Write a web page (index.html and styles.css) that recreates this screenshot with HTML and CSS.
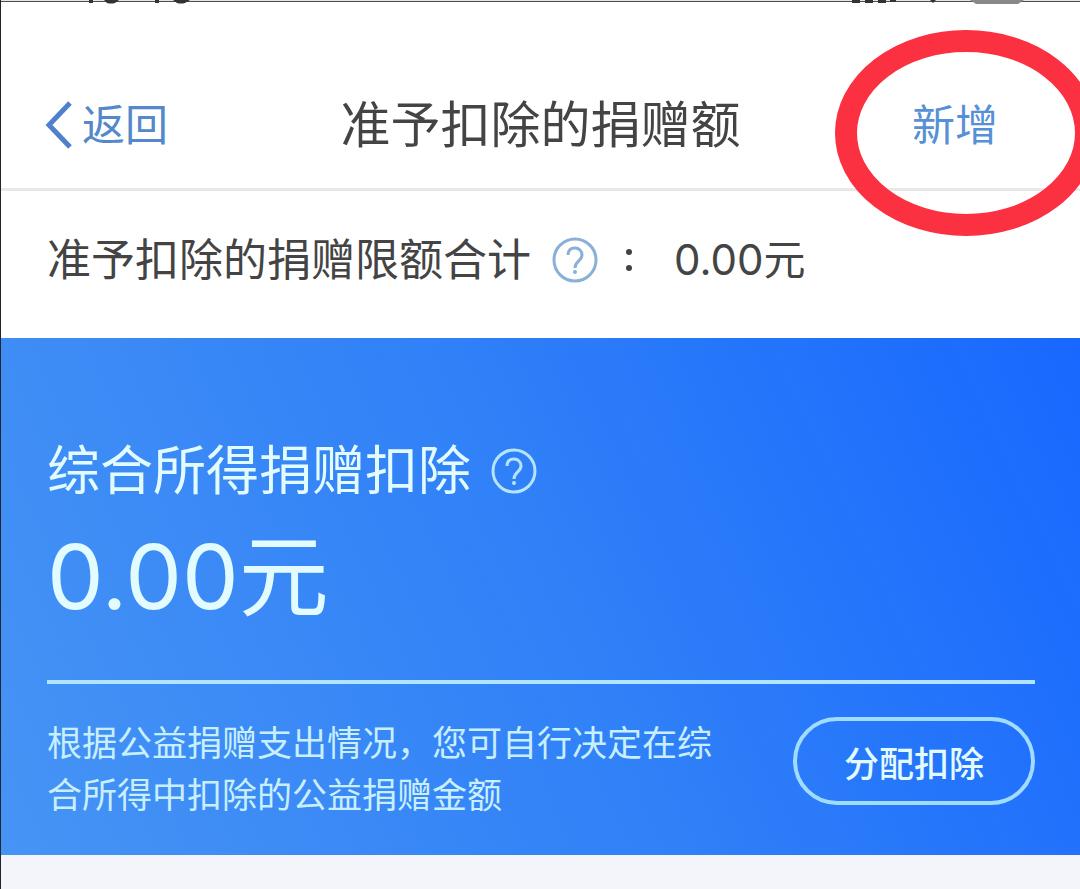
FILE: index.html
```html
<!DOCTYPE html>
<html lang="zh-CN">
<head>
<meta charset="utf-8">
<meta name="viewport" content="width=device-width, initial-scale=1">
<title>准予扣除的捐赠额</title>
<link rel="stylesheet" href="styles.css">
</head>
<body>
<div class="page">
  <div class="status" aria-hidden="true">
    <svg class="status-time" width="110" height="4" viewBox="0 0 110 4"><path d="M4 0h4v3H4zM19 0h15l-4 3q-4 1-8 0zM70 0h4v3h-4zM88 0h17l-5 3q-4 1-8 0z"/></svg>
    <svg class="status-signal" width="176" height="4" viewBox="0 0 176 4"><path d="M0 0h8v3H0zM13 0h8v3h-8zM26 0h8v3h-8zM38 0h6v2h-6zM78 0h6l-3 3z"/><path class="battery" d="M118 0h54l-6 4h-42z"/></svg>
  </div>
  <header class="header">
    <a class="back" href="#">
      <svg width="28" height="48" viewBox="0 0 28 48"><path d="M25 2 4 24l21 22"/></svg>
      <span>返回</span>
    </a>
    <h1 class="title">准予扣除的捐赠额</h1>
    <div class="add-wrap">
      <button class="add" type="button">新增</button>
      <svg class="ring" width="264" height="208" viewBox="0 0 264 208" aria-hidden="true"><ellipse cx="132" cy="104" rx="120" ry="92"/></svg>
    </div>
  </header>
  <main>
    <section class="summary">
      <span>准予扣除的捐赠限额合计</span>
      <button class="help" type="button" aria-label="限额说明">
        <svg width="46" height="46" viewBox="0 0 46 46"><circle cx="23" cy="23" r="21"/><path d="M16 18c0-5 3-7 7-7s7 3 7 7c0 6-7 6-7 13"/><circle class="dot" cx="23" cy="35" r="2"/></svg>
      </button>
      <span class="colon"><i></i><i></i></span>
      <span class="total">0.00元</span>
    </section>
    <section class="card">
      <h2 class="card-title">
        <span>综合所得捐赠扣除</span>
        <button class="help" type="button" aria-label="扣除说明">
          <svg width="46" height="46" viewBox="0 0 46 46"><circle cx="23" cy="23" r="21"/><path d="M16 18c0-5 3-7 7-7s7 3 7 7c0 6-7 6-7 13"/><circle class="dot" cx="23" cy="35" r="2"/></svg>
        </button>
      </h2>
      <p class="amount">0.00元</p>
      <div class="card-foot">
        <p class="note">根据公益捐赠支出情况，您可自行决定在综合所得中扣除的公益捐赠金额</p>
        <button class="allot" type="button">分配扣除</button>
      </div>
    </section>
  </main>
</div>
</body>
</html>
```
FILE: styles.css
```css
* { box-sizing: border-box; }
body {
  margin: 0;
  background: #f4f5fa;
  color: #444;
  font-family: Inter, "Noto Sans CJK SC", sans-serif;
}
h1, h2, p { margin: 0; font-weight: 400; }
button {
  padding: 0;
  border: 0;
  background: none;
  color: inherit;
  font: inherit;
}
svg { display: block; fill: none; }
.page {
  min-height: 100vh;
  border-left: 1px solid #20242c;
  overflow: hidden;
}
.status {
  display: flex;
  justify-content: space-between;
  height: 4px;
  padding: 0 52px 0 84px;
  background: linear-gradient(#e4e6e4 0 1px, #4c4e4c 1px 2px, #fff 2px);
}
.status svg { fill: #333; }
.status .battery { fill: #888; }
.header {
  display: grid;
  grid-template-columns: 1fr auto 1fr;
  align-items: center;
  padding: 89px 0 31px;
  border-bottom: 3px solid #e8e8e8;
  background: #fff;
  line-height: 64px;
}
.back {
  display: flex;
  align-items: center;
  gap: 9px;
  padding-left: 44px;
  color: #5388cb;
  font-size: 43px;
  text-decoration: none;
}
.back svg { stroke: #5080cc; stroke-width: 5; }
.title { font-size: 50px; }
.add-wrap {
  position: relative;
  justify-self: end;
  margin-right: 82px;
  color: #5690d6;
  font-size: 43px;
}
.add { display: block; }
.ring {
  position: absolute;
  z-index: 1;
  top: -64px;
  left: -78px;
  stroke: #fb3041;
  stroke-width: 22;
  pointer-events: none;
}
.summary {
  display: flex;
  align-items: center;
  padding: 37px 45px 46px 46px;
  background: #fff;
  font-size: 44px;
  line-height: 64px;
}
.help { flex: none; }
.help svg { stroke: currentColor; stroke-width: 3; }
.help .dot { fill: currentColor; stroke: none; }
.summary .help { margin-left: 21px; color: #8ab0d8; }
.colon {
  display: grid;
  gap: 10px;
  margin: 0 42px 0 28px;
}
.colon i { width: 6px; height: 6px; border-radius: 3px; background: #444; }
.total { font-size: 42px; }
.card {
  padding: 101px 45px 34px 46px;
  background: linear-gradient(65deg, #4694f4 0%, #3080f8 52%, #1868ff 100%);
  color: #e2fbff;
}
.card-title {
  display: flex;
  align-items: center;
  gap: 20px;
  font-size: 53px;
  line-height: 64px;
}
.card-title .help { color: #b4e4ff; }
.amount {
  padding: 26px 0 55px;
  border-bottom: 4px solid #b0e4ff;
  font-size: 90px;
  line-height: 96px;
}
.card-foot {
  display: flex;
  align-items: center;
  justify-content: space-between;
  gap: 40px;
  padding-top: 33px;
}
.note {
  flex: 0 1 680px;
  color: #c8efff;
  font-size: 35px;
  line-height: 52px;
}
.allot {
  flex: none;
  width: 242px;
  height: 88px;
  margin-bottom: 16px;
  border: 4px solid #a0dcff;
  border-radius: 44px;
  font-size: 35px;
  font-weight: 500;
}
```
